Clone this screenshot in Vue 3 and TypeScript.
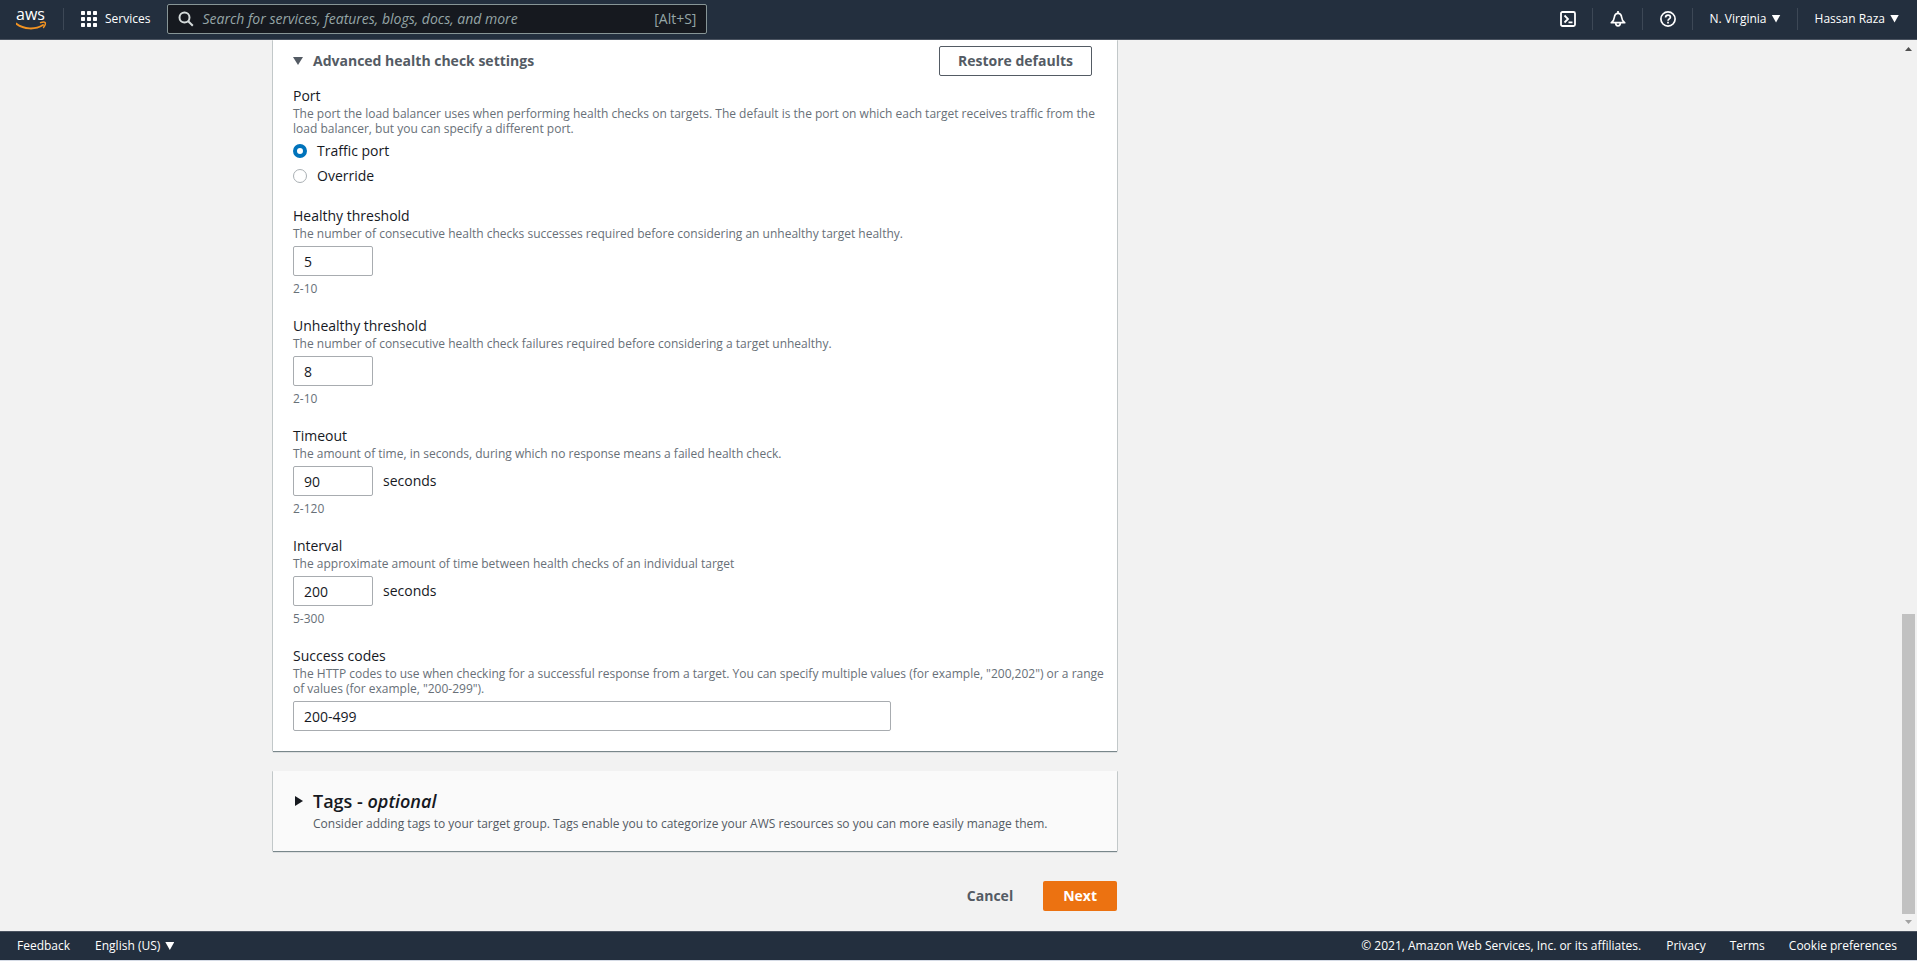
<script setup lang="ts">
import { ref } from 'vue'

interface NumberField {
  id: string
  label: string
  description: string
  value: string
  unit?: string
  constraint: string
}

const search = ref('')
const port = ref('traffic')
const successCodes = ref('200-499')

const fields = ref<NumberField[]>([
  {
    id: 'healthy',
    label: 'Healthy threshold',
    description: 'The number of consecutive health checks successes required before considering an unhealthy target healthy.',
    value: '5',
    constraint: '2-10',
  },
  {
    id: 'unhealthy',
    label: 'Unhealthy threshold',
    description: 'The number of consecutive health check failures required before considering a target unhealthy.',
    value: '8',
    constraint: '2-10',
  },
  {
    id: 'timeout',
    label: 'Timeout',
    description: 'The amount of time, in seconds, during which no response means a failed health check.',
    value: '90',
    unit: 'seconds',
    constraint: '2-120',
  },
  {
    id: 'interval',
    label: 'Interval',
    description: 'The approximate amount of time between health checks of an individual target',
    value: '200',
    unit: 'seconds',
    constraint: '5-300',
  },
])
</script>

<template>
  <div class="console">
    <header class="topbar">
      <a class="logo" href="#" aria-label="AWS home">
        <svg width="32" height="36" viewBox="0 0 32 36">
          <text class="logo-text" x="0" y="19">aws</text>
          <path d="M0 22.500c8 6 19 6.500 27 1.500" fill="none" stroke="#f29322" stroke-width="2" stroke-linecap="round" />
          <path d="M24.500 21.700c2-.8 4-.8 4.700-.2.500 1-.3 3.300-1.700 5" fill="none" stroke="#f29322" stroke-width="1.400" stroke-linecap="round" />
        </svg>
      </a>
      <span class="divider"></span>
      <button class="services" type="button">
        <svg width="16" height="16" viewBox="0 0 16 16" fill="#fff">
          <template v-for="row in 3" :key="row">
            <rect v-for="col in 3" :key="col" :x="(col - 1) * 6" :y="(row - 1) * 6" width="4" height="4" rx="0.700" />
          </template>
        </svg>
        <span>Services</span>
      </button>
      <label class="search">
        <svg width="16" height="16" viewBox="0 0 16 16" fill="none" stroke="#d5dbdb" stroke-width="2">
          <circle cx="6.500" cy="6.500" r="5" />
          <path d="M10.200 10.200l4.600 4.600" />
        </svg>
        <input v-model="search" type="search" aria-label="Search" placeholder="Search for services, features, blogs, docs, and more" />
        <span>[Alt+S]</span>
      </label>
      <nav class="tools" aria-label="Account tools">
        <button type="button" class="icon" aria-label="CloudShell">
          <svg width="16" height="16" viewBox="0 0 16 16" fill="none" stroke="#fff" stroke-width="1.800">
            <rect x="1" y="1" width="14" height="14" rx="1.500" />
            <path d="M4.500 4.500L8 8l-3.500 3.500M8.500 11.300h4" />
          </svg>
        </button>
        <button type="button" class="icon" aria-label="Notifications">
          <svg width="16" height="16" viewBox="0 0 16 16" fill="none" stroke="#fff" stroke-width="1.700" stroke-linejoin="round">
            <path d="M1.300 11.700h13.400c-1.600-1-2.700-2.600-3-5.200C11.400 4 10.200 2.300 8 2.300S4.600 4 4.300 6.500c-.3 2.600-1.400 4.200-3 5.200z" />
            <path d="M8 0v2M5.700 12c0 1.700.9 2.800 2.300 2.800s2.300-1.100 2.300-2.800" />
          </svg>
        </button>
        <button type="button" class="icon" aria-label="Help">
          <svg width="16" height="16" viewBox="0 0 16 16" fill="none" stroke="#fff" stroke-width="1.700">
            <circle cx="8" cy="8" r="7.100" />
            <path d="M5.600 6.500C5.600 5 6.600 4.100 8 4.100s2.400.8 2.400 2.100c0 1.600-2.400 1.700-2.400 3.500M8 10.700v1.700" />
          </svg>
        </button>
        <button type="button" class="menu region">N. Virginia<i class="caret"></i></button>
        <button type="button" class="menu account">Hassan Raza<i class="caret"></i></button>
      </nav>
    </header>

    <div class="body">
      <main class="content">
        <section class="card settings">
          <div class="settings-head">
            <button type="button" class="toggle" aria-expanded="true">
              <i class="caret"></i>Advanced health check settings
            </button>
            <button type="button" class="btn outline">Restore defaults</button>
          </div>
          <div class="fields">
            <fieldset class="field">
              <legend class="label">Port</legend>
              <p class="hint">
                The port the load balancer uses when performing health checks on targets. The default is the port on
                which each target receives traffic from the load balancer, but you can specify a different port.
              </p>
              <div class="radios">
                <label><input v-model="port" type="radio" name="port" value="traffic" />Traffic port</label>
                <label><input v-model="port" type="radio" name="port" value="override" />Override</label>
              </div>
            </fieldset>
            <div v-for="field in fields" :key="field.id" class="field">
              <label class="label" :for="field.id">{{ field.label }}</label>
              <p class="hint">{{ field.description }}</p>
              <div class="control">
                <input :id="field.id" v-model="field.value" class="box short" type="text" inputmode="numeric" />
                <span v-if="field.unit">{{ field.unit }}</span>
              </div>
              <p class="hint constraint">{{ field.constraint }}</p>
            </div>
            <div class="field">
              <label class="label" for="codes">Success codes</label>
              <p class="hint">
                The HTTP codes to use when checking for a successful response from a target. You can specify multiple
                values (for example, "200,202") or a range of values (for example, "200-299").
              </p>
              <div class="control">
                <input id="codes" v-model="successCodes" class="box long" type="text" />
              </div>
            </div>
          </div>
        </section>

        <section class="card tags">
          <button type="button" class="tags-toggle" aria-expanded="false">
            <i class="caret-right"></i>
            <span class="tags-title">Tags - <em>optional</em></span>
          </button>
          <p class="tags-text">
            Consider adding tags to your target group. Tags enable you to categorize your AWS resources so you can more
            easily manage them.
          </p>
        </section>

        <div class="actions">
          <button type="button" class="btn plain">Cancel</button>
          <button type="button" class="btn primary">Next</button>
        </div>
      </main>
      <div class="scrollbar" aria-hidden="true">
        <i class="arrow up"></i>
        <div class="track"><div class="thumb"></div></div>
        <i class="arrow down"></i>
      </div>
    </div>

    <footer class="footer">
      <a href="#">Feedback</a>
      <button type="button" class="menu">English (US)<i class="caret"></i></button>
      <span class="copyright">© 2021, Amazon Web Services, Inc. or its affiliates.</span>
      <nav class="links" aria-label="Legal">
        <a href="#">Privacy</a>
        <a href="#">Terms</a>
        <a href="#">Cookie preferences</a>
      </nav>
    </footer>
  </div>
</template>

<style>
body {
  background: #d5dbe6;
}
</style>

<style scoped>
.console {
  display: flex;
  flex-direction: column;
  height: calc(100vh - 1px);
  overflow: hidden;
  background: #f2f2f2;
  color: #16191f;
  font-family: "Open Sans", "Noto Sans", sans-serif;
  font-size: 14px;
  line-height: 20px;
}

* {
  box-sizing: border-box;
}

button,
input {
  font: inherit;
  color: inherit;
}

button {
  padding: 0;
  border: 0;
  background: none;
  cursor: pointer;
}

a {
  color: inherit;
  text-decoration: none;
}

p {
  margin: 0;
}

svg {
  display: block;
  flex: none;
}

.caret {
  flex: none;
  width: 9px;
  height: 8px;
  background: currentColor;
  clip-path: polygon(0 0, 100% 0, 50% 100%);
}

.topbar {
  display: flex;
  flex: none;
  align-items: center;
  height: 40px;
  padding: 0 18px 2px 16px;
  border-bottom: 1px solid #4a5360;
  background: #232f3e;
  color: #fff;
  font-size: 12px;
  font-weight: 500;
}

.logo {
  margin-right: 15px;
}

.logo-text {
  font-family: "Open Sans", sans-serif;
  font-size: 16px;
  font-weight: 500;
  fill: #fff;
}

.divider {
  width: 1px;
  height: 22px;
  background: #3d4856;
}

.services {
  display: flex;
  align-items: center;
  gap: 8px;
  margin: 0 17px;
}

.search {
  display: flex;
  flex: 0 1 540px;
  align-items: center;
  gap: 8px;
  height: 30px;
  padding: 0 10px;
  border: 1px solid #879596;
  border-radius: 2px;
  background: #16191f;
  color: #95a5a6;
  font-size: 14px;
  font-weight: 400;
}

.search input {
  flex: 1;
  min-width: 0;
  padding: 0;
  border: 0;
  outline: 0;
  background: none;
}

.search input::placeholder {
  color: #95a5a6;
  font-style: italic;
  opacity: 1;
}

.tools {
  display: flex;
  align-items: center;
  margin-left: auto;
}

.tools button {
  display: flex;
  align-items: center;
  height: 22px;
}

.tools button + button {
  border-left: 1px solid #3d4856;
}

.tools .icon {
  padding: 0 16px 0 17px;
}

.menu {
  display: flex;
  align-items: center;
  gap: 5px;
}

.tools .menu {
  padding-left: 17px;
}

.tools .region {
  padding-right: 16px;
}

.body {
  display: flex;
  flex: 1;
  min-height: 0;
}

.content {
  flex: 1;
  min-width: 0;
  padding: 0 20px 20px 273px;
  overflow: hidden;
}

.card {
  max-width: 844px;
  padding: 20px;
  background: #fff;
  box-shadow: 0 1px 1px 0 rgba(0, 28, 36, 0.5), 1px 0 0 0 #d5d9d9, -1px 0 0 0 #d5d9d9;
}

.settings {
  padding: 6px 8px 20px 20px;
}

.settings-head {
  display: flex;
  align-items: center;
  justify-content: space-between;
  padding-right: 17px;
  margin-bottom: 10px;
}

.toggle {
  display: flex;
  align-items: center;
  gap: 10px;
  color: #545b64;
  font-weight: 700;
}

.toggle .caret {
  width: 10px;
}

.btn {
  height: 30px;
  padding: 0 20px;
  border-radius: 2px;
  color: #545b64;
  font-weight: 700;
}

.outline {
  padding: 0 18px;
  border: 1px solid #545b64;
  background: #fff;
}

.primary {
  background: #ec7211;
  color: #fff;
}

.fields {
  display: flex;
  flex-direction: column;
  gap: 20px;
}

.field {
  min-width: 0;
  padding: 0;
  margin: 0;
  border: 0;
}

.label {
  display: block;
  padding: 0;
}

.hint {
  color: #687078;
  font-size: 12px;
  line-height: 15px;
}

.radios {
  display: flex;
  flex-direction: column;
  gap: 5px;
  margin-top: 5px;
}

.radios label {
  display: flex;
  align-items: center;
  gap: 10px;
}

.radios input {
  width: 14px;
  height: 14px;
  margin: 0;
  border: 1px solid #aab0b4;
  border-radius: 50%;
  background: #fff;
  appearance: none;
}

.radios input:checked {
  border: 4px solid #0073bb;
}

.control {
  display: flex;
  align-items: center;
  gap: 10px;
  margin-top: 5px;
}

.box {
  height: 30px;
  padding: 0 10px;
  border: 1px solid #a8acb0;
  border-radius: 2px;
  background: #fff;
}

.short {
  width: 80px;
}

.long {
  width: 100%;
  max-width: 598px;
}

.constraint {
  margin-top: 5px;
}

.tags {
  margin-top: 20px;
  background: #fafafa;
}

.tags-toggle {
  display: flex;
  align-items: center;
  gap: 10px;
  padding-left: 2px;
}

.caret-right {
  width: 8px;
  height: 10px;
  background: currentColor;
  clip-path: polygon(0 0, 100% 50%, 0 100%);
}

.tags-title {
  font-size: 18px;
  font-weight: 600;
}

.tags-text {
  padding-left: 20px;
  margin-top: 5px;
  color: #545b64;
  font-size: 12px;
  line-height: 15px;
}

.actions {
  display: flex;
  justify-content: flex-end;
  gap: 10px;
  max-width: 844px;
  margin-top: 30px;
}

.scrollbar {
  display: flex;
  flex: none;
  flex-direction: column;
  align-items: center;
  width: 17px;
  padding: 7px 0;
  background: #f1f1f1;
}

.arrow {
  width: 7px;
  height: 4px;
  background: #505050;
  clip-path: polygon(50% 0, 100% 100%, 0 100%);
}

.down {
  background: #a3a3a3;
  clip-path: polygon(0 0, 100% 0, 50% 100%);
}

.track {
  display: flex;
  flex: 1;
  flex-direction: column;
  justify-content: flex-end;
  align-self: stretch;
  padding: 6px 2px;
}

.thumb {
  height: 35%;
  background: #c1c1c1;
}

.footer {
  display: flex;
  flex: none;
  align-items: center;
  height: 29px;
  gap: 25px;
  padding: 0 20px 0 17px;
  border-top: 1px solid #4a5360;
  background: #232f3e;
  color: #fff;
  font-size: 12px;
  font-weight: 500;
}

.copyright {
  margin-left: auto;
}

.links {
  display: flex;
  gap: 24px;
}
</style>
